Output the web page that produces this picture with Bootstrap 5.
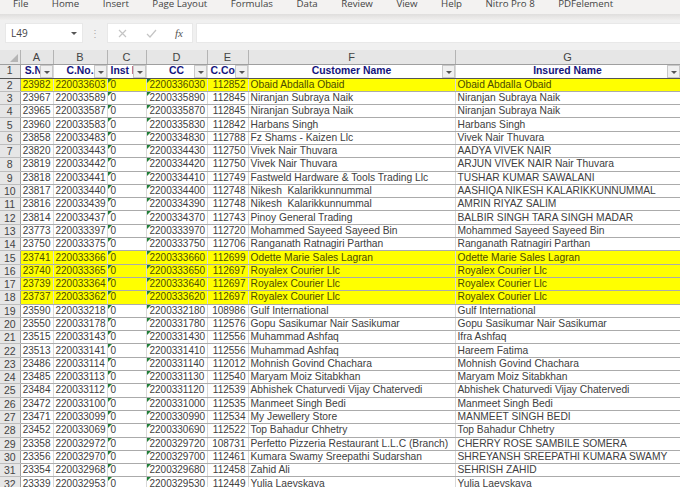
<!DOCTYPE html>
<html>
<head>
    <meta charset="utf-8">
    <title>Excel Sheet</title>
    <link href="https://cdn.jsdelivr.net/npm/bootstrap@5.3.0/dist/css/bootstrap.min.css" rel="stylesheet">
    <style>
        html, body { height: 487px; overflow: hidden; background: #fff; }
        .ribbon-tabs { height: 14px; background: #f3f2f1; overflow: hidden; font: 9.7px "Open Sans", sans-serif; color: #444; padding-left: 13px; gap: 23.5px; line-height: 7px; white-space: nowrap; }
        .ribbon-edge { height: 6px; background: linear-gradient(#dfdedd, #f0efee); }
        .formula-area { height: 30px; background: #f0f0f0; padding: 3px 0 7px 5px; }
        .name-box, .fx-box, .fx-input { background: #fff; border: 1px solid #e8e8e8; height: 20px; }
        .name-box { width: 78px; font: 10px "Open Sans", sans-serif; color: #444; padding: 0 5px; }
        .name-caret { border: 3px solid transparent; border-top: 3px solid #555; border-bottom: 0; }
        .dots-col { width: 24px; color: #aaa; font-size: 10px; }
        .fx-box { width: 86px; padding: 0 9px 0 10px; }
        .fx-input { margin-left: 3px; border-right: 0; }
        .fx-sign { font: italic 11px "Liberation Serif", serif; color: #555; }
        .sheet-table { table-layout: fixed; width: 680px; border-collapse: collapse; font: 10px "Liberation Sans", sans-serif; color: #404040; }
        .sheet-table td, .sheet-table th { padding: 0 2px; overflow: hidden; white-space: pre; border-right: 1px solid #d8d8d8; border-bottom: 1px solid #ababab; height: 13.3px; line-height: 12px; position: relative; font-weight: 400; }
        .sheet-table .col-head th { background: #e6e6e6; height: 14px; text-align: center; color: #444; font-size: 11px; border-right: 1px solid #b4b4b4; border-bottom: 1px solid #9f9f9f; }
        .sheet-table .row-num { background: #e6e6e6; color: #444; text-align: center; border-right: 1px solid #9f9f9f; border-bottom: 1px solid #bdbdbd; padding: 0; font-size: 10.5px; }
        .sheet-table .filter-row th { font-weight: 700; font-size: 10.4px; color: #14147d; background: #fff; text-align: center; padding: 0 3px; height: 14px; border-bottom: 1px solid #555; }
        .sheet-table .filter-row .row-num { color: #444; font-weight: 400; background: #e6e6e6; padding: 0; }
        .sheet-table .mark-row td:not(.row-num) { background: #ffff00; color: #4c4c00; }
        .sheet-table .name-cell { font-size: 10.25px; }
        .sheet-table .txt-flag { padding-left: 3px; }
        .num-cell { text-align: right; }
        .corner-mark { position: absolute; right: 2px; bottom: 2px; border-bottom: 8px solid #b5b5b5; border-left: 8px solid transparent; }
        .filter-btn { position: absolute; right: 0; top: 0; width: 13px; height: 13px; background: #f0f0f0; border: 1px solid #c8c8c8; }
        .filter-btn::after { content: ""; position: absolute; left: 3px; top: 5px; border: 3px solid transparent; border-top: 3px solid #555; border-bottom: 0; }
        .txt-flag::before { content: ""; position: absolute; left: 0; top: 0; border-top: 4px solid #1f7f38; border-right: 4px solid transparent; }
    </style>
</head>
<body>
    <div class="ribbon-tabs d-flex">
        <span>File</span><span>Home</span><span>Insert</span><span>Page Layout</span><span>Formulas</span><span>Data</span><span>Review</span><span>View</span><span>Help</span><span>Nitro Pro 8</span><span>PDFelement</span>
    </div>
    <div class="ribbon-edge"></div>
    <div class="formula-area d-flex align-items-center">
        <div class="name-box d-flex align-items-center justify-content-between"><span>L49</span><span class="name-caret"></span></div>
        <div class="dots-col text-center">⋮</div>
        <div class="fx-box d-flex align-items-center justify-content-between">
            <svg width="9" height="9" viewBox="0 0 9 9"><path d="M1 1l7 7M8 1L1 8" stroke="#c4c4c4" stroke-width="1.2" fill="none"/></svg>
            <svg width="11" height="9" viewBox="0 0 11 9"><path d="M1 5l3 3 6-7" stroke="#c4c4c4" stroke-width="1.2" fill="none"/></svg>
            <span class="fx-sign">fx</span>
        </div>
        <div class="fx-input flex-grow-1"></div>
    </div>
    <table class="sheet-table">
        <colgroup>
            <col style="width:20px"><col style="width:33px"><col style="width:54px"><col style="width:39px"><col style="width:61px"><col style="width:41px"><col style="width:207px"><col style="width:225px">
        </colgroup>
        <thead>
            <tr class="col-head"><th><span class="corner-mark"></span></th><th>A</th><th>B</th><th>C</th><th>D</th><th>E</th><th>F</th><th>G</th></tr>
            <tr class="filter-row">
                <th class="row-num">1</th>
                <th>S.No<span class="filter-btn"></span></th>
                <th>C.No.<span class="filter-btn"></span></th>
                <th>Inst No<span class="filter-btn"></span></th>
                <th>CC<span class="filter-btn"></span></th>
                <th>C.Code<span class="filter-btn"></span></th>
                <th>Customer Name<span class="filter-btn"></span></th>
                <th>Insured Name<span class="filter-btn"></span></th>
            </tr>
        </thead>
        <tbody id="sheet-body"></tbody>
    </table>

    <script>
        // sno, cno, cc, code, customer, insured (blank insured = same as customer)
        const rows = [
            [23982, 220033603, 2200336030, 112852, 'Obaid Abdalla Obaid', '', 1],
            [23967, 220033589, 2200335890, 112845, 'Niranjan Subraya Naik', ''],
            [23965, 220033587, 2200335870, 112845, 'Niranjan Subraya Naik', ''],
            [23960, 220033583, 2200335830, 112842, 'Harbans Singh', ''],
            [23858, 220033483, 2200334830, 112788, 'Fz Shams - Kaizen Llc', 'Vivek Nair Thuvara'],
            [23820, 220033443, 2200334430, 112750, 'Vivek Nair Thuvara', 'AADYA VIVEK NAIR'],
            [23819, 220033442, 2200334420, 112750, 'Vivek Nair Thuvara', 'ARJUN VIVEK NAIR Nair Thuvara'],
            [23818, 220033441, 2200334410, 112749, 'Fastweld Hardware & Tools Trading Llc', 'TUSHAR KUMAR SAWALANI'],
            [23817, 220033440, 2200334400, 112748, 'Nikesh  Kalarikkunnummal', 'AASHIQA NIKESH KALARIKKUNNUMMAL'],
            [23816, 220033439, 2200334390, 112748, 'Nikesh  Kalarikkunnummal', 'AMRIN RIYAZ SALIM'],
            [23814, 220033437, 2200334370, 112743, 'Pinoy General Trading', 'BALBIR SINGH TARA SINGH MADAR'],
            [23773, 220033397, 2200333970, 112720, 'Mohammed Sayeed Sayeed Bin', ''],
            [23750, 220033375, 2200333750, 112706, 'Ranganath Ratnagiri Parthan', ''],
            [23741, 220033366, 2200333660, 112699, 'Odette Marie Sales Lagran', '', 1],
            [23740, 220033365, 2200333650, 112697, 'Royalex Courier Llc', '', 1],
            [23739, 220033364, 2200333640, 112697, 'Royalex Courier Llc', '', 1],
            [23737, 220033362, 2200333620, 112697, 'Royalex Courier Llc', '', 1],
            [23590, 220033218, 2200332180, 108986, 'Gulf International', ''],
            [23550, 220033178, 2200331780, 112576, 'Gopu Sasikumar Nair Sasikumar', ''],
            [23515, 220033143, 2200331430, 112556, 'Muhammad Ashfaq', 'Ifra Ashfaq'],
            [23513, 220033141, 2200331410, 112556, 'Muhammad Ashfaq', 'Hareem Fatima'],
            [23486, 220033114, 2200331140, 112012, 'Mohnish Govind Chachara', ''],
            [23485, 220033113, 2200331130, 112540, 'Maryam Moiz Sitabkhan', ''],
            [23484, 220033112, 2200331120, 112539, 'Abhishek Chaturvedi Vijay Chatervedi', ''],
            [23472, 220033100, 2200331000, 112535, 'Manmeet Singh Bedi', ''],
            [23471, 220033099, 2200330990, 112534, 'My Jewellery Store', 'MANMEET SINGH BEDI'],
            [23452, 220033069, 2200330690, 112522, 'Top Bahadur Chhetry', ''],
            [23358, 220032972, 2200329720, 108731, 'Perfetto Pizzeria Restaurant L.L.C (Branch)', 'CHERRY ROSE SAMBILE SOMERA'],
            [23356, 220032970, 2200329700, 112461, 'Kumara Swamy Sreepathi Sudarshan', 'SHREYANSH SREEPATHI KUMARA SWAMY'],
            [23354, 220032968, 2200329680, 112458, 'Zahid Ali', 'SEHRISH ZAHID'],
            [23339, 220032953, 2200329530, 112449, 'Yulia Laevskaya', '']
        ];

        // Build the sheet rows
        const body = document.getElementById('sheet-body');
        rows.forEach((r, i) => {
            const tr = document.createElement('tr');
            if (r[6]) tr.classList.add('mark-row');
            tr.innerHTML = `
                <td class="row-num">${i + 2}</td>
                <td class="num-cell">${r[0]}</td>
                <td class="num-cell">${r[1]}</td>
                <td class="txt-flag">0</td>
                <td class="txt-flag">${r[2]}</td>
                <td class="num-cell">${r[3]}</td>
                <td class="name-cell">${r[4].replace('&', '&amp;')}</td>
                <td class="name-cell">${r[5] || r[4]}</td>
            `;
            body.appendChild(tr);
        });
    </script>
    <script src="https://cdn.jsdelivr.net/npm/bootstrap@5.3.0/dist/js/bootstrap.bundle.min.js"></script>
</body>
</html>
